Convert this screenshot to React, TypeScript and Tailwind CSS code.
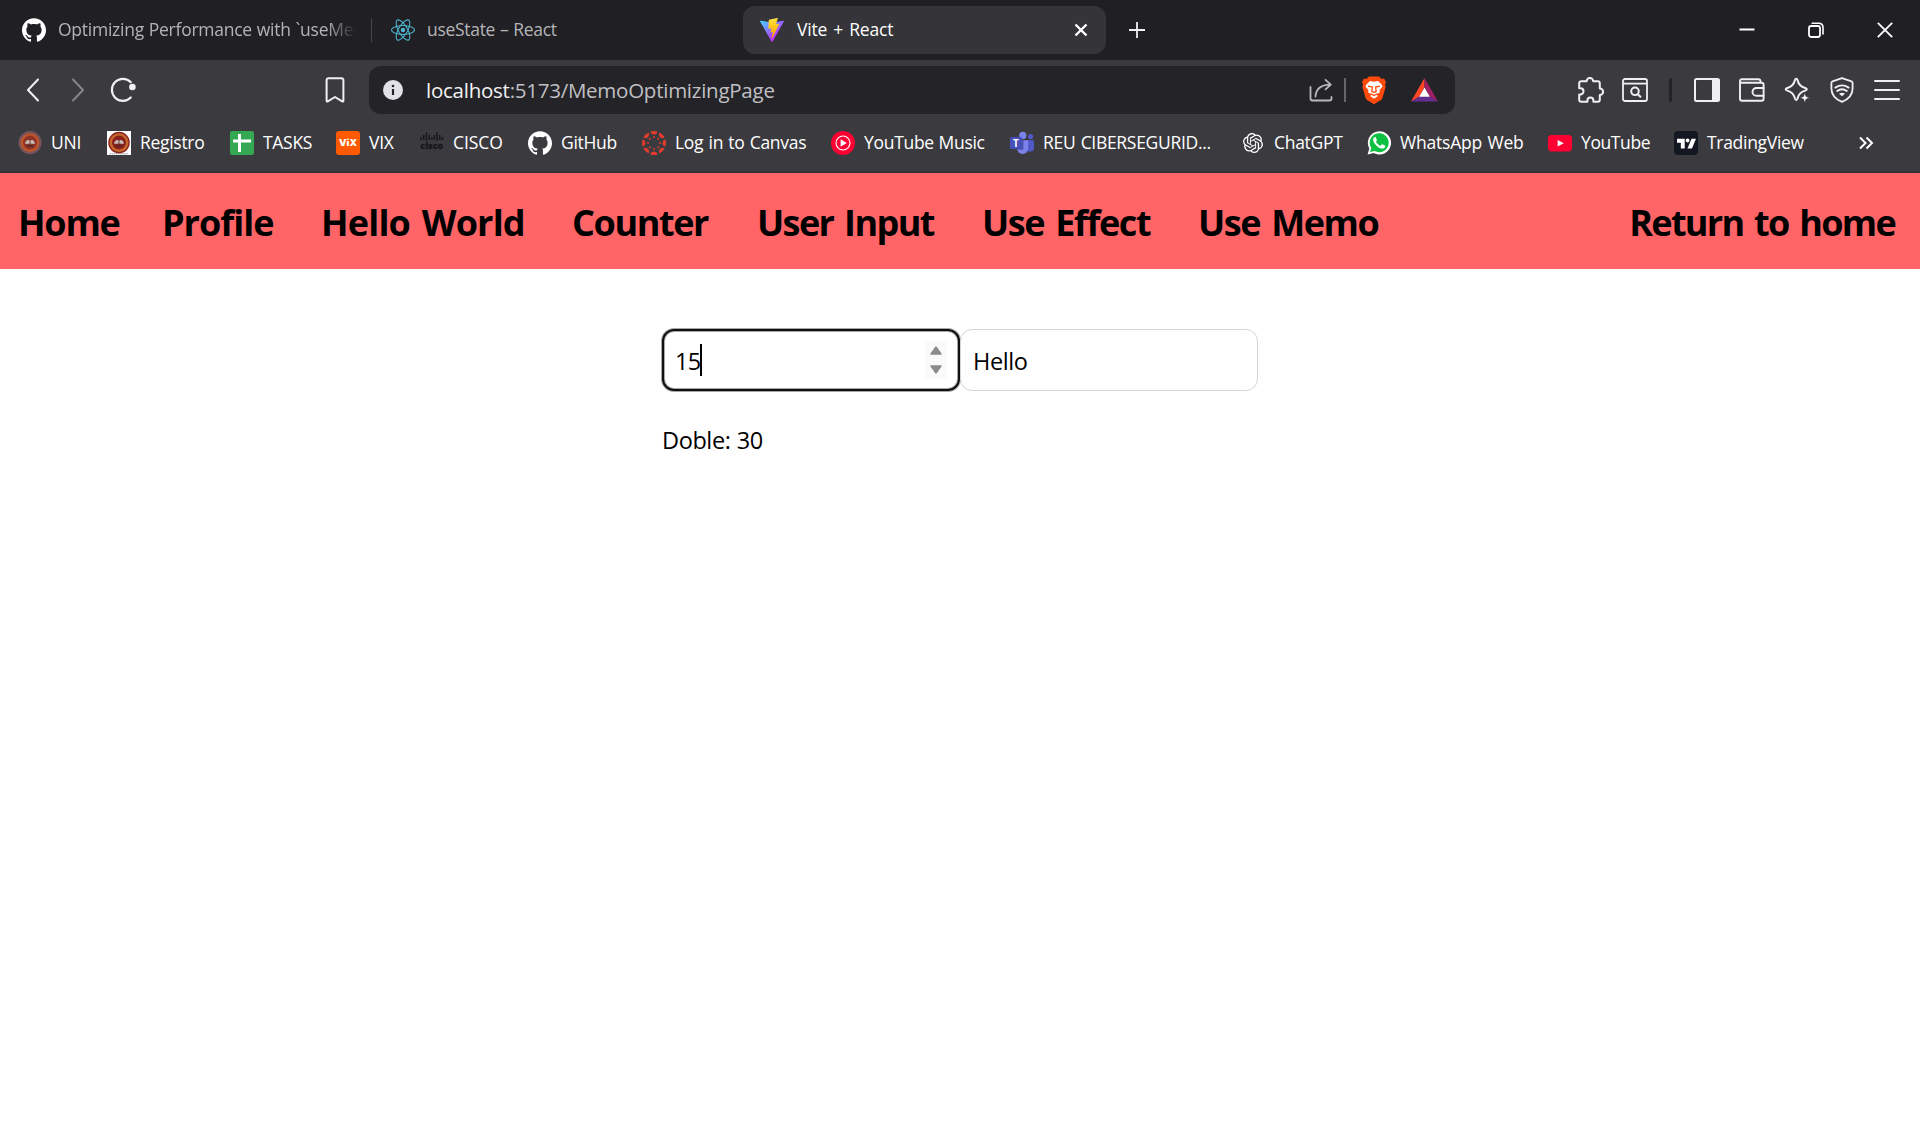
import type { ReactNode } from "react";
import {
  SiGithub,
  SiOpenai,
  SiReact,
  SiTradingview,
} from "react-icons/si";

const stroke = {
  fill: "none",
  stroke: "currentColor",
  strokeWidth: 2,
  strokeLinecap: "round",
  strokeLinejoin: "round",
} as const;

function ViteLogo() {
  return (
    <svg width="24" height="24" viewBox="0 0 256 257">
      <defs>
        <linearGradient id="viteA" x1="-.828%" x2="57.636%" y1="7.652%" y2="78.411%">
          <stop offset="0%" stopColor="#41D1FF" />
          <stop offset="100%" stopColor="#BD34FE" />
        </linearGradient>
        <linearGradient id="viteB" x1="43.376%" x2="50.316%" y1="2.242%" y2="89.03%">
          <stop offset="0%" stopColor="#FFEA83" />
          <stop offset="8.333%" stopColor="#FFDD35" />
          <stop offset="100%" stopColor="#FFA800" />
        </linearGradient>
      </defs>
      <path
        fill="url(#viteA)"
        d="M255.153 37.938L134.897 252.976c-2.483 4.44-8.862 4.466-11.382.048L.875 37.958c-2.746-4.814 1.371-10.646 6.827-9.67l120.385 21.517a6.537 6.537 0 0 0 2.322-.004l117.867-21.483c5.438-.991 9.574 4.796 6.877 9.62Z"
      />
      <path
        fill="url(#viteB)"
        d="M185.432.063L96.44 17.501a3.268 3.268 0 0 0-2.634 3.014l-5.474 92.456a3.268 3.268 0 0 0 3.997 3.378l24.777-5.718c2.318-.535 4.413 1.507 3.936 3.838l-7.361 36.047c-.495 2.426 1.782 4.5 4.151 3.78l15.304-4.649c2.372-.72 4.652 1.36 4.15 3.788l-11.698 56.621c-.732 3.542 3.979 5.473 5.943 2.437l1.313-2.028l72.516-144.72c1.215-2.423-.88-5.186-3.54-4.672l-25.505 4.922c-2.396.462-4.435-1.77-3.759-4.114l16.646-57.705c.677-2.35-1.37-4.583-3.769-4.113Z"
      />
    </svg>
  );
}

function Seal({ square }: { square?: boolean }) {
  return (
    <svg width="24" height="24" viewBox="0 0 24 24">
      {square && <rect width="24" height="24" fill="#fff" />}
      <circle cx="12" cy="11.6" r={square ? 10.8 : 11.6} fill={square ? "#8c2622" : "#77545a"} />
      <circle cx="12" cy="11.6" r="9.4" fill={square ? "#c5692b" : "#bf5528"} />
      <circle cx="12" cy="11.6" r="7" fill={square ? "#8a1f1c" : "#913428"} />
      <path d="M7.4 13V11L9.4 9L12 9.6L14.6 9L16.6 11V13L12 12.4Z" fill="#c9bdb8" />
      <path d="M12 9.3V12.8" stroke="#7a3a34" strokeWidth="1" />
      <path d="M9 14.8H15" stroke="#4c2a2a" strokeWidth="1.6" />
      {square && <path d="M2.5 22.8H21.5" stroke="#8a8a8a" strokeWidth="0.9" strokeDasharray="1.5 0.6" />}
    </svg>
  );
}

function TasksIcon() {
  return (
    <svg width="24" height="24" viewBox="0 0 24 24">
      <rect width="24" height="24" rx="2.2" fill="#34a853" />
      <path d="M9.5 3V21M3 10H21" stroke="#fff" strokeWidth="3" />
    </svg>
  );
}

function VixIcon() {
  return (
    <svg width="24" height="24" viewBox="0 0 24 24">
      <rect width="24" height="24" rx="3" fill="#ff5a00" />
      <text x="12" y="15" textAnchor="middle" textLength="18" lengthAdjust="spacingAndGlyphs" fill="#fff" fontSize="9" fontWeight="900" fontFamily="Inter">
        ViX
      </text>
    </svg>
  );
}

function CiscoIcon() {
  return (
    <svg width="24" height="24" viewBox="0 0 24 24">
      <path
        d="M1 6V9M3.8 4V9M6.5 1.5V10M9.2 4V9M11.8 6V9M14.4 4V9M17.1 1.5V10M19.8 4V9M22.5 6V9"
        stroke="#18181a"
        strokeWidth="1.5"
      />
      <text x="11.8" y="18" textAnchor="middle" textLength="23" lengthAdjust="spacingAndGlyphs" fill="#18181a" stroke="#18181a" strokeWidth="0.3" fontSize="9.5" fontWeight="800" fontFamily="Open Sans">
        cisco
      </text>
    </svg>
  );
}

function CanvasIcon() {
  const angles = [0, 45, 90, 135, 180, 225, 270, 315];
  return (
    <svg width="24" height="24" viewBox="-12 -12 24 24" fill="#e33b2e">
      {angles.map((a) => (
        <g key={a} transform={`rotate(${a})`}>
          <path d="M-3.6 -11.4A12 12 0 0 1 3.6 -11.4A3.7 3.7 0 0 1 -3.6 -11.4Z" />
          <circle cx="0" cy="-6" r="1" />
        </g>
      ))}
    </svg>
  );
}

function YouTubeMusicIcon() {
  return (
    <svg width="24" height="24" viewBox="0 0 24 24">
      <circle cx="12" cy="12" r="12" fill="#ff0033" />
      <circle cx="12" cy="12" r="7" fill="none" stroke="#fff" strokeWidth="1.1" />
      <path d="M9.6 8.2V15.8L15.8 12Z" fill="#fff" />
    </svg>
  );
}

function TeamsIcon() {
  return (
    <svg width="24" height="24" viewBox="0 0 24 24">
      <circle cx="20.6" cy="5.6" r="2.6" fill="#5059c9" />
      <path d="M16 9.2H23.2Q24 9.2 24 10V16.2A4 4 0 0 1 16 17Z" fill="#5059c9" />
      <circle cx="12.8" cy="4.4" r="3.6" fill="#7b83eb" />
      <path d="M7 9.2H17.2Q18.2 9.2 18.2 10.2V17.2A5.6 5.8 0 0 1 7 17.2Z" fill="#7b83eb" />
      <path d="M7 9.2H13.4V17.6Q13.4 18.8 12.2 18.8H7.3Z" fill="#4a50ae" />
      <rect x="0" y="6" width="12" height="12" rx="1" fill="#464eb8" />
      <text x="6" y="15.6" textAnchor="middle" fill="#fff" fontSize="10" fontWeight="700" fontFamily="Open Sans">
        T
      </text>
    </svg>
  );
}

function WhatsAppIcon() {
  return (
    <svg width="24" height="24" viewBox="0 0 24 24">
      <path d="M0.6 23.6L2.3 17.5A11.6 11.6 0 1 1 6.6 21.9Z" fill="#fff" />
      <path d="M3 21L4.3 17A9.5 9.5 0 1 1 7.6 20Z" fill="#0fc143" />
      <path
        d="M8.9 6.6C8.7 6.1 8.4 6.1 8.1 6.1C7.3 6.1 6.2 7.1 6.2 8.9C6.2 10.6 7.5 12.3 7.7 12.5C8 12.8 10.3 16.4 13.8 17.4C16.3 18.1 18 16.8 18.2 15.8C18.3 15 18.3 14.6 18 14.4L15.5 13.2C15.2 13.1 15 13.1 14.8 13.4L13.8 14.6C13.6 14.8 13.4 14.8 13.1 14.7C11.4 14 9.9 12.6 9.1 11.1C9 10.9 9 10.7 9.2 10.5C9.6 10.1 9.9 9.7 9.9 9.3Z"
        fill="#fff"
      />
    </svg>
  );
}

function YouTubeIcon() {
  return (
    <svg width="24" height="24" viewBox="0 0 24 24">
      <rect y="4" width="24" height="16.4" rx="3.6" fill="#ff0033" />
      <path d="M9.6 8.9V15.5L15.8 12.2Z" fill="#fff" />
    </svg>
  );
}

function TradingViewIcon() {
  return (
    <span className="flex h-6 w-6 items-center justify-center rounded bg-[#131722]">
      <SiTradingview size={19} color="#fff" />
    </span>
  );
}

type Bookmark = { label: string; icon: ReactNode; slot: string; track: string };

const bookmarks: Bookmark[] = [
  { label: "UNI", icon: <Seal />, slot: "w-[89px]", track: "tracking-[-0.2px]" },
  { label: "Registro", icon: <Seal square />, slot: "w-[123px]", track: "tracking-[-0.3px]" },
  { label: "TASKS", icon: <TasksIcon />, slot: "w-[106px]", track: "tracking-[-0.3px]" },
  { label: "VIX", icon: <VixIcon />, slot: "w-[84px]", track: "tracking-[-0.3px]" },
  { label: "CISCO", icon: <CiscoIcon />, slot: "w-[108px]", track: "tracking-[-0.1px]" },
  { label: "GitHub", icon: <SiGithub size={24} />, slot: "w-[114px]", track: "tracking-[-0.3px]" },
  { label: "Log in to Canvas", icon: <CanvasIcon />, slot: "w-[189px]", track: "tracking-[-0.3px] [word-spacing:1px]" },
  { label: "YouTube Music", icon: <YouTubeMusicIcon />, slot: "w-[179px]", track: "tracking-[-0.3px] [word-spacing:0.5px]" },
  { label: "REU CIBERSEGURID...", icon: <TeamsIcon />, slot: "w-[231px]", track: "tracking-[-0.3px] [word-spacing:1px]" },
  { label: "ChatGPT", icon: <SiOpenai size={20} />, slot: "w-[126px]", track: "tracking-[-0.3px]" },
  { label: "WhatsApp Web", icon: <WhatsAppIcon />, slot: "w-[181px]", track: "tracking-[-0.2px] [word-spacing:1px]" },
  { label: "YouTube", icon: <YouTubeIcon />, slot: "w-[126px]", track: "tracking-[-0.4px]" },
  { label: "TradingView", icon: <TradingViewIcon />, slot: "w-[179px]", track: "tracking-[-0.3px]" },
];

function TabStrip() {
  return (
    <div className="flex h-[60px] items-center bg-[#201f24] text-[17.5px] text-[#b4b4b7]">
      <div className="flex w-[371px] items-center pl-[22px]">
        <SiGithub size={24} color="#fff" className="shrink-0" />
        <span className="ml-3 w-[298px] overflow-hidden whitespace-nowrap pb-[2px] tracking-[-0.25px] [mask-image:linear-gradient(to_right,black_90%,transparent_100%)] [word-spacing:0.5px]">
          Optimizing Performance with `useMemo`
        </span>
      </div>
      <div className="h-6 w-px bg-[#46464b]" />
      <div className="flex w-[371px] items-center pl-[19px]">
        <SiReact size={24} color="#4fb4cc" className="shrink-0" />
        <span className="ml-3 pb-[2px] tracking-[-0.3px] [word-spacing:0.6px]">useState – React</span>
      </div>
      <div className="flex h-12 w-[363px] items-center rounded-xl bg-[#353439] pl-[17px] pr-[18px] text-white">
        <ViteLogo />
        <span className="ml-[13px] flex-1 pb-[2px] tracking-[-0.2px] [word-spacing:1.8px]">Vite + React</span>
        <svg width="14" height="14" viewBox="0 0 14 14">
          <path d="M1.5 1.5L12.5 12.5M12.5 1.5L1.5 12.5" stroke="#fff" strokeWidth="2.4" />
        </svg>
      </div>
      <svg width="16" height="16" viewBox="0 0 16 16" className="ml-[23px]">
        <path d="M8 0V16M0 8H16" stroke="#f0f0f2" strokeWidth="1.8" />
      </svg>
      <div className="ml-auto flex items-center pr-[27px] text-white">
        <svg width="16" height="16" viewBox="0 0 16 16">
          <path d="M0.5 7.5H15.5" stroke="currentColor" strokeWidth="2" />
        </svg>
        <svg width="16" height="16" viewBox="0 0 16 16" className="ml-[53px]">
          <rect x="1" y="4" width="11" height="11" rx="2.2" {...stroke} strokeWidth={1.8} />
          <path d="M4.2 1.2H11A4 4 0 0 1 15 5.2V12" {...stroke} strokeWidth={1.6} />
        </svg>
        <svg width="16" height="16" viewBox="0 0 16 16" className="ml-[53px]">
          <path d="M0.8 0.8L15.2 15.2M15.2 0.8L0.8 15.2" stroke="currentColor" strokeWidth="1.8" />
        </svg>
      </div>
    </div>
  );
}

function Slot({ children, className }: { children: ReactNode; className: string }) {
  return <div className={`flex shrink-0 items-center justify-center ${className}`}>{children}</div>;
}

function Toolbar() {
  return (
    <div className="flex h-[60px] items-center pl-[10px] text-[#f0f0f2]">
      <Slot className="w-[46px]">
        <svg width="14" height="24" viewBox="0 0 14 24">
          <path d="M12 1.5L2 12L12 22.5" {...stroke} />
        </svg>
      </Slot>
      <Slot className="w-[44px] text-[#86868a]">
        <svg width="14" height="24" viewBox="0 0 14 24">
          <path d="M2 1.5L12 12L2 22.5" {...stroke} />
        </svg>
      </Slot>
      <Slot className="w-[45px]">
        <svg width="28" height="26" viewBox="0 0 28 26">
          <path d="M21.8 20.5A11 11 0 1 1 21.8 5.2" {...stroke} strokeWidth={2.2} />
          <circle cx="23.4" cy="10" r="3.3" fill="currentColor" />
        </svg>
      </Slot>
      <Slot className="ml-[167px] w-[46px]">
        <svg width="20" height="26" viewBox="0 0 20 26">
          <path d="M1.6 3A2 2 0 0 1 3.6 1.2H16.4A2 2 0 0 1 18.4 3V23.8Q18.4 25 17.2 24.3L10 20L2.8 24.3Q1.6 25 1.6 23.8Z" {...stroke} />
        </svg>
      </Slot>
      <div className="ml-[11px] flex h-12 w-[1086px] shrink-0 items-center rounded-xl bg-[#242328] pl-[14px] pr-[17px]">
        <svg width="20" height="20" viewBox="0 0 20 20">
          <circle cx="10" cy="10" r="10" fill="#e2e1e7" />
          <path d="M10 9V15" stroke="#242328" strokeWidth="2.2" />
          <circle cx="10" cy="6" r="1.3" fill="#242328" />
        </svg>
        <span className="ml-[23px] flex-1 text-[20.5px] tracking-[-0.25px] text-[#c0c0c4]">
          <span className="text-[#f2f2f4]">localhost</span>:5173/MemoOptimizingPage
        </span>
        <svg width="24" height="24" viewBox="0 0 24 24" className="text-[#b9b9bd]">
          <path d="M1.5 9V20.5A2 2 0 0 0 3.5 22.5H20.5A2 2 0 0 0 22.5 20.5V19" {...stroke} strokeWidth={1.8} />
          <path d="M6.5 18.5C7 11 11 6.8 21 6.6M16.5 1.8L21.8 6.6L16.5 11.4" {...stroke} strokeWidth={1.8} />
        </svg>
        <div className="ml-[11px] h-6 w-[2px] bg-[#67676b]" />
        <svg width="24" height="28" viewBox="0 0 24 28" className="ml-4">
          <path
            d="M7 0.5H17L19.5 3L22 2.6L24 6L23 8.8L23.6 11L20.4 22Q20 23.4 18.6 24.3L12.8 27.7Q12 28.1 11.2 27.7L5.4 24.3Q4 23.4 3.6 22L0.4 11L1 8.8L0 6L2 2.6L4.5 3Z"
            fill="#ff4a0c"
          />
          <path
            d="M8 5L12 5.8L16 5L19.6 8.6L20.6 10.6L17.6 14L17.8 16.6L14 18.5L16 20L12 22.8L8 20L10 18.5L6.2 16.6L6.4 14L3.4 10.6L4.4 8.6Z"
            fill="#fff"
          />
          <path d="M6 10.2L10.4 11L9.8 15.4L12 16.6L14.2 15.4L13.6 11L18 10.2M8.8 17.8L12 19.6L15.2 17.8" fill="none" stroke="#ff4a0c" strokeWidth="1.3" />
        </svg>
        <svg width="27" height="24" viewBox="0 0 27 24" className="ml-[25px]">
          <path d="M13.5 0L0 23.5L8.5 18.5L13.5 9Z" fill="#ff4724" />
          <path d="M13.5 0L27 23.5L18.5 18.5L13.5 9Z" fill="#9e1f63" />
          <path d="M0 23.5H27L18.5 18.5H8.5Z" fill="#662d91" />
          <path d="M13.5 9.5L18.8 18.8H8.2Z" fill="#fff" />
        </svg>
      </div>
      <Slot className="ml-[114px] w-11">
        <svg width="26" height="26" viewBox="0 0 26 26">
          <path
            d="M3.2 4.2H8.6A3.3 3.3 0 0 1 15.2 4.2H19.8A2 2 0 0 1 21.8 6.2V11.4A3.3 3.3 0 0 1 21.8 18V22.8A2 2 0 0 1 19.8 24.8H15.4V23.6A3 3 0 0 0 9.4 23.6V24.8H3.2A2 2 0 0 1 1.2 22.8V17.4H2.4A3 3 0 0 0 2.4 11.2H1.2V6.2A2 2 0 0 1 3.2 4.2Z"
            {...stroke}
          />
        </svg>
      </Slot>
      <Slot className="w-11">
        <svg width="26" height="24" viewBox="0 0 26 24">
          <rect x="1" y="1" width="24" height="22" rx="2" {...stroke} strokeWidth={1.8} />
          <path d="M1 5.6H25" stroke="currentColor" strokeWidth="1.8" />
          <circle cx="13" cy="13.3" r="3.8" {...stroke} />
          <path d="M15.8 16.2L18.4 18.8" {...stroke} />
        </svg>
      </Slot>
      <Slot className="w-[27px]">
        <div className="h-6 w-[3px] rounded-sm bg-[#232227]" />
      </Slot>
      <Slot className="w-[45px]">
        <svg width="26" height="24" viewBox="0 0 26 24">
          <rect x="1" y="1" width="24" height="22" rx="1.5" {...stroke} />
          <path d="M18 1H25V23H18Z" fill="currentColor" />
        </svg>
      </Slot>
      <Slot className="w-[45px]">
        <svg width="26" height="24" viewBox="0 0 26 24">
          <path d="M21.5 4.8V3.2A2 2 0 0 0 19.5 1.2H3A2 2 0 0 0 1 3.2V20.8A2 2 0 0 0 3 22.8H22.6A2 2 0 0 0 24.6 20.8V6.8A2 2 0 0 0 22.6 4.8H1.2" {...stroke} strokeWidth={1.9} />
          <path d="M24.6 10H17.4A3.8 3.8 0 0 0 17.4 17.8H24.6" {...stroke} strokeWidth={1.9} />
        </svg>
      </Slot>
      <Slot className="w-[45px]">
        <svg width="26" height="26" viewBox="0 0 26 26">
          <path
            d="M12.2 1.8C13 1.8 13.3 2.3 13.6 3.3C14.6 7.8 16.6 9.8 21.2 11C23.4 11.6 23.4 13 21.2 13.6C16.6 14.8 14.6 16.8 13.6 21.3C13 23.5 11.5 23.5 10.9 21.3C9.8 16.8 7.8 14.8 3.3 13.6C1.1 13 1.1 11.6 3.3 11C7.8 9.8 9.8 7.8 10.9 3.3C11.2 2.3 11.5 1.8 12.2 1.8Z"
            {...stroke}
          />
          <path d="M20.8 15.6L22.2 19.4L26 20.8L22.2 22.2L20.8 26L19.4 22.2L15.6 20.8L19.4 19.4Z" fill="currentColor" stroke="#3b3a3f" strokeWidth="0.8" />
        </svg>
      </Slot>
      <Slot className="w-[45px]">
        <svg width="24" height="26" viewBox="0 0 24 26">
          <path d="M12 1.2L21.5 4.4Q22.6 4.8 22.6 6V11.5C22.6 17.8 18.6 22.2 12 24.9C5.4 22.2 1.4 17.8 1.4 11.5V6Q1.4 4.8 2.5 4.4Z" {...stroke} strokeWidth={1.8} />
          <path d="M5.4 10.6Q12 6.2 18.6 10.6M7.2 14Q12 10.6 16.8 14" {...stroke} strokeWidth={1.9} />
          <path d="M9 16.8Q12 14.8 15 16.8L12 19.2Z" fill="currentColor" />
        </svg>
      </Slot>
      <Slot className="w-[45px]">
        <svg width="26" height="22" viewBox="0 0 26 22">
          <path d="M1 2H25M1 11H25M1 20H25" {...stroke} />
        </svg>
      </Slot>
    </div>
  );
}

function BookmarksBar() {
  return (
    <div className="flex h-[53px] items-center border-b-2 border-[#333237] pb-[5px] pl-[18px] text-[17.5px] text-white">
      {bookmarks.map((b) => (
        <div key={b.label} className={`flex shrink-0 items-center ${b.slot}`}>
          <span className="mr-[9px] flex h-6 w-6 shrink-0 items-center justify-center">{b.icon}</span>
          <span className={`whitespace-nowrap pb-px ${b.track}`}>{b.label}</span>
        </div>
      ))}
      <svg width="16" height="14" viewBox="0 0 16 14" className="ml-[5px]">
        <path d="M2 1.5L7.5 7L2 12.5M8.5 1.5L14 7L8.5 12.5" {...stroke} strokeLinecap="butt" strokeLinejoin="miter" />
      </svg>
    </div>
  );
}

const links = [
  { label: "Home", cls: "w-[144px] tracking-[-1.2px]" },
  { label: "Profile", cls: "w-[159px] tracking-[-1px]" },
  { label: "Hello World", cls: "w-[251px] tracking-[-0.8px] [word-spacing:3px]" },
  { label: "Counter", cls: "w-[185px] tracking-[-1.4px]" },
  { label: "User Input", cls: "w-[225px] tracking-[-1.6px] [word-spacing:3px]" },
  { label: "Use Effect", cls: "w-[216px] tracking-[-1.4px] [word-spacing:3px]" },
  { label: "Use Memo", cls: "w-[200px] tracking-[-1.4px] [word-spacing:3px]" },
];

export default function App() {
  return (
    <div className="h-[1128px] w-[1920px] overflow-hidden bg-white font-['Open_Sans',sans-serif]">
      <header className="bg-[#3b3a3f]">
        <TabStrip />
        <Toolbar />
        <BookmarksBar />
      </header>
      <nav className="flex h-24 items-center bg-[#ff6467] pl-[18px] pr-[25px] pt-[3px] text-[36px] font-bold text-black">
        {links.map((l) => (
          <a key={l.label} className={`shrink-0 whitespace-nowrap ${l.cls}`}>
            {l.label}
          </a>
        ))}
        <a className="ml-auto whitespace-nowrap tracking-[-1.7px] [word-spacing:3px]">Return to home</a>
      </nav>
      <main className="mx-auto w-[596px] pt-[60px] text-[23.5px] text-black">
        <div className="flex">
          <div className="flex h-[62px] w-[298px] items-center rounded-xl pl-[13px] pr-[13px] shadow-[inset_0_0_0_2px_#101010,inset_0_0_0_3px_#a8a8a8,0_0_0_1px_#a8a8a8]">
            <span className="pt-1 tracking-[-0.8px]">15</span>
            <span className="h-8 w-[2px] bg-black" />
            <span className="ml-auto flex h-9 w-[22px] flex-col items-center justify-between bg-[#fafafa] py-1">
              <svg width="12" height="9" viewBox="0 0 12 9">
                <path d="M6 1L11 8H1Z" fill="#8b8b8b" stroke="#8b8b8b" strokeWidth="1.4" strokeLinejoin="round" />
              </svg>
              <svg width="12" height="9" viewBox="0 0 12 9">
                <path d="M6 8L11 1H1Z" fill="#8b8b8b" stroke="#8b8b8b" strokeWidth="1.4" strokeLinejoin="round" />
              </svg>
            </span>
          </div>
          <div className="flex h-[62px] w-[298px] items-center rounded-xl border border-[#d1d5dc] pl-3 pt-1 tracking-[-0.4px]">Hello</div>
        </div>
        <p className="mt-8 tracking-[-0.4px] [word-spacing:0.5px]">Doble: 30</p>
      </main>
    </div>
  );
}
